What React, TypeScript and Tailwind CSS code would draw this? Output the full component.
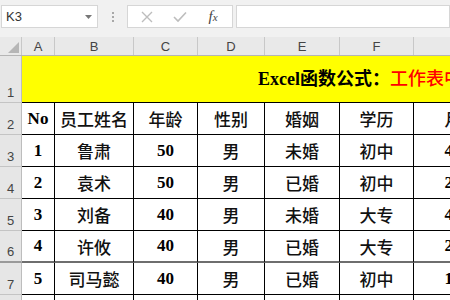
import React from "react";

const colW = [
  "w-[33px]",
  "w-[79px]",
  "w-[64px]",
  "w-[67px]",
  "w-[75px]",
  "w-[74px]",
  "w-[96px]",
];
const letters = ["A", "B", "C", "D", "E", "F", "G"];

const rows: { n: string; cells: string[]; thick?: boolean }[] = [
  { n: "2", cells: ["No", "员工姓名", "年龄", "性别", "婚姻", "学历", "月薪"] },
  { n: "3", cells: ["1", "鲁肃", "50", "男", "未婚", "初中", "4500"] },
  { n: "4", cells: ["2", "袁术", "50", "男", "已婚", "初中", "2800"] },
  { n: "5", cells: ["3", "刘备", "40", "男", "未婚", "大专", "4200"] },
  { n: "6", cells: ["4", "许攸", "40", "男", "已婚", "大专", "2300"], thick: true },
  { n: "7", cells: ["5", "司马懿", "40", "男", "已婚", "初中", "1800"] },
];

const isAscii = (s: string) => /^[\x00-\x7f]+$/.test(s);

function Cell({ text, w, thick }: { text: string; w: string; thick?: boolean }) {
  const ascii = isAscii(text);
  return (
    <div
      className={`${w} shrink-0 h-full flex items-center justify-center border-r border-black ${
        thick ? "border-b-2 border-b-[#6e6e6e]" : "border-b border-b-black"
      }`}
    >
      <span
        className={
          ascii
            ? "font-['Liberation_Serif',serif] font-bold text-[17px] text-black whitespace-nowrap"
            : "font-['Noto_Sans_CJK_SC',sans-serif] font-medium text-[17px] leading-none text-[#111] whitespace-nowrap"
        }
      >
        {text}
      </span>
    </div>
  );
}

function RowHeader({ n, thick }: { n: string; thick?: boolean }) {
  return (
    <div
      className={`w-[22px] shrink-0 h-full bg-[#e6e6e6] border-r border-[#bdbdbd] ${
        thick ? "border-b-2 border-b-[#9a9a9a]" : "border-b border-b-[#c4c4c4]"
      } flex items-end justify-center pb-[1px]`}
    >
      <span className="font-['Liberation_Sans',sans-serif] text-[13px] leading-none text-[#444] pb-[2px]">
        {n}
      </span>
    </div>
  );
}

export default function App() {
  return (
    <div className="w-[450px] h-[300px] overflow-hidden bg-white flex flex-col">
      {/* Formula bar */}
      <div className="h-[37px] shrink-0 bg-[#f1f1f1] flex items-start pt-[5px] pl-[1px] gap-0">
        <div className="w-[97px] h-[23px] shrink-0 bg-white border border-[#d6d6d6] flex items-center justify-between pl-[4px] pr-[5px]">
          <span className="font-['Liberation_Sans',sans-serif] text-[13px] text-[#333]">K3</span>
          <svg width="7" height="4" viewBox="0 0 7 4">
            <path d="M0 0 L7 0 L3.5 4 Z" fill="#777" />
          </svg>
        </div>
        <div className="w-[29px] h-[23px] shrink-0 flex items-center justify-center">
          <div className="flex flex-col gap-[2px]">
            <div className="w-[2px] h-[2px] bg-[#a8a8a8]" />
            <div className="w-[2px] h-[2px] bg-[#a8a8a8]" />
            <div className="w-[2px] h-[2px] bg-[#a8a8a8]" />
          </div>
        </div>
        <div className="w-[106px] h-[23px] shrink-0 bg-white border border-[#d6d6d6] flex items-center">
          <div className="w-[34px] flex justify-center pl-[4px]">
            <svg width="12" height="12" viewBox="0 0 12 12">
              <path d="M1 1 L11 11 M11 1 L1 11" stroke="#bdbdbd" strokeWidth="1.4" />
            </svg>
          </div>
          <div className="w-[34px] flex justify-center pl-[2px]">
            <svg width="14" height="12" viewBox="0 0 14 12">
              <path d="M1 6 L5 10 L13 1.5" stroke="#bdbdbd" strokeWidth="1.6" fill="none" />
            </svg>
          </div>
          <div className="w-[34px] flex justify-center">
            <span className="font-['Liberation_Serif',serif] italic text-[15px] text-[#444] leading-none">
              f<span className="text-[11px]">x</span>
            </span>
          </div>
        </div>
        <div className="ml-[3px] flex-1 h-[23px] bg-white border border-[#d6d6d6]" />
      </div>

      {/* Column headers */}
      <div className="h-[19px] shrink-0 flex bg-[#e9e9e9] border-b border-[#b5b5b5]">
        <div className="w-[22px] shrink-0 h-full border-r border-[#c8c8c8] relative">
          <svg className="absolute right-[2px] bottom-[2px]" width="11" height="11" viewBox="0 0 11 11">
            <path d="M11 0 L11 11 L0 11 Z" fill="#b6b6b6" />
          </svg>
        </div>
        {letters.map((l, i) => (
          <div
            key={l}
            className={`${colW[i]} shrink-0 h-full border-r border-[#c8c8c8] flex items-center justify-center`}
          >
            <span className="font-['Liberation_Sans',sans-serif] text-[13px] text-[#444] leading-none">{l}</span>
          </div>
        ))}
      </div>

      {/* Row 1 title */}
      <div className="h-[47px] shrink-0 flex">
        <RowHeader n="1" />
        <div className="w-[488px] shrink-0 h-full bg-[#ffff00] border-b border-black flex items-center pl-[236px]">
          <span className="whitespace-nowrap font-['Liberation_Serif','Noto_Sans_CJK_SC',serif] text-[18px] leading-none">
            <span className="text-black font-bold">Excel函数公式：</span>
            <span className="text-[#ff0000] font-medium">工作表中常用技巧</span>
          </span>
        </div>
      </div>

      {rows.map((r) => (
        <div key={r.n} className="h-[32px] shrink-0 flex">
          <RowHeader n={r.n} thick={r.thick} />
          {r.cells.map((c, i) => (
            <Cell key={i} text={c} w={colW[i]} thick={r.thick} />
          ))}
        </div>
      ))}

      <div className="h-[32px] shrink-0 flex">
        <RowHeader n="8" />
        {colW.map((w, i) => (
          <div key={i} className={`${w} shrink-0 h-full border-r border-black`} />
        ))}
      </div>
    </div>
  );
}
